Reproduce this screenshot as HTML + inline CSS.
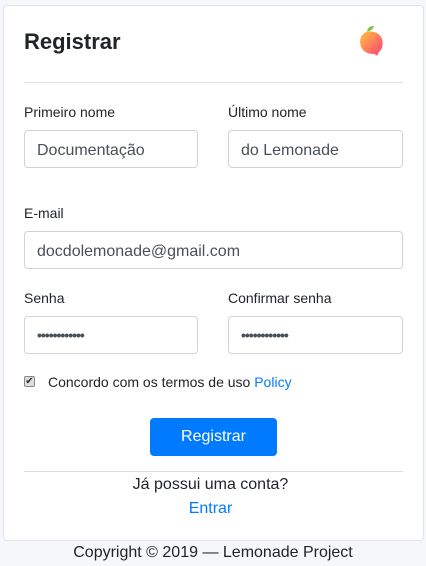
<!DOCTYPE html>
<html><head><meta charset="utf-8"><style>
*{box-sizing:border-box;margin:0;padding:0}
body{width:426px;height:566px;background:#f5f7fa;font-family:"Liberation Sans",sans-serif;color:#212529;position:relative;overflow:hidden}
.card{position:absolute;left:3px;top:5px;width:421px;height:536px;background:#fff;border:1px solid #e0e3e7;border-radius:4px}
h1{position:absolute;left:20px;top:23px;font-size:22px;font-weight:bold;color:#212529}
.hr{position:absolute;left:20px;width:379px;height:1px;background:#dcdfe3}
.lbl{position:absolute;font-size:14px;color:#212529}
.in{position:absolute;height:38px;border:1px solid #ced4da;border-radius:4px;font-size:16px;color:#495057;padding:11px 12px 0;line-height:18px}
.dots{font-size:14px;letter-spacing:-1px;padding-top:9px;font-weight:bold}
.btn{position:absolute;left:146px;top:412px;width:127px;height:38px;background:#007bff;border-radius:4px;color:#fff;font-size:16px;text-align:center;line-height:38px}
.c{position:absolute;width:100%;text-align:center;font-size:16px}
</style></head><body>
<div class="card">
<h1>Registrar</h1>
<svg style="position:absolute;left:353px;top:18px" width="30" height="34" viewBox="0 0 28 32">
<defs><linearGradient id="g" x1="0" y1="0" x2="1" y2="1"><stop offset="0" stop-color="#ffc43a"/><stop offset="1" stop-color="#ff3c7a"/></linearGradient></defs>
<path d="M9 7 Q11 1 16 2 Q14 7 9 7Z" fill="#7dc443"/>
<path d="M12 7 C5 7 2 13 3 19 C4 25 10 29 16 28 L19 30 L20 27 C24 24 25 18 23 13 C21 9 17 7 12 7Z" fill="url(#g)"/>
</svg>
<div class="hr" style="top:76px"></div>
<div class="lbl" style="left:20px;top:98px">Primeiro nome</div>
<div class="lbl" style="left:224px;top:98px">Último nome</div>
<div class="in" style="left:20px;top:124px;width:174px">Documentação</div>
<div class="in" style="left:224px;top:124px;width:175px">do Lemonade</div>
<div class="lbl" style="left:20px;top:199px">E-mail</div>
<div class="in" style="left:20px;top:225px;width:379px">docdolemonade@gmail.com</div>
<div class="lbl" style="left:20px;top:284px">Senha</div>
<div class="lbl" style="left:224px;top:284px">Confirmar senha</div>
<div class="in dots" style="left:20px;top:310px;width:174px">••••••••••••</div>
<div class="in dots" style="left:224px;top:310px;width:175px">••••••••••••</div>
<div style="position:absolute;left:20px;top:370px;width:11px;height:11px;border:1px solid #888;border-radius:2px;background:#ddd;font-size:10px;line-height:9px;text-align:center;color:#333">✔</div>
<div class="lbl" style="left:44px;top:368px">Concordo com os termos de uso <span style="color:#007bff">Policy</span></div>
<div class="btn">Registrar</div>
<div class="hr" style="top:465px"></div>
<div class="c" style="top:470px;left:-3px">Já possui uma conta?</div>
<div class="c" style="top:494px;left:-3px;color:#007bff">Entrar</div>
</div>
<div class="c" style="top:544px">Copyright © 2019 — Lemonade Project</div>
</body></html>
